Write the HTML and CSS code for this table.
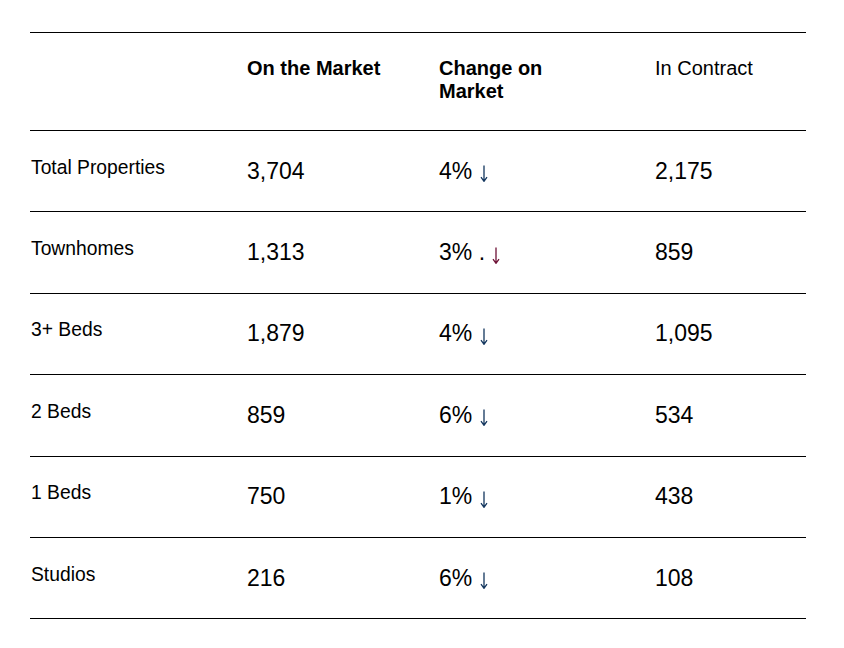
FILE: index.html
```html
<!DOCTYPE html>
<html lang="en">
<head>
<meta charset="utf-8">
<title>Market Summary</title>
<link rel="stylesheet" href="styles.css">
</head>
<body>
<div class="table">
  <div class="row head">
    <div class="cell"></div>
    <div class="cell th">On the Market</div>
    <div class="cell th narrow">Change on Market</div>
    <div class="cell thin">In Contract</div>
  </div>
  <div class="row">
    <div class="cell label">Total Properties</div>
    <div class="cell num">3,704</div>
    <div class="cell num">4% <svg class="down" viewBox="0 0 8 17" aria-label="down"><path d="M4 0.5V16M1 12.2L4 16.3L7 12.2"/></svg></div>
    <div class="cell num">2,175</div>
  </div>
  <div class="row">
    <div class="cell label">Townhomes</div>
    <div class="cell num">1,313</div>
    <div class="cell num">3% . <svg class="down red" viewBox="0 0 8 17" aria-label="down"><path d="M4 0.5V16M1 12.2L4 16.3L7 12.2"/></svg></div>
    <div class="cell num">859</div>
  </div>
  <div class="row">
    <div class="cell label">3+ Beds</div>
    <div class="cell num">1,879</div>
    <div class="cell num">4% <svg class="down" viewBox="0 0 8 17" aria-label="down"><path d="M4 0.5V16M1 12.2L4 16.3L7 12.2"/></svg></div>
    <div class="cell num">1,095</div>
  </div>
  <div class="row">
    <div class="cell label">2 Beds</div>
    <div class="cell num">859</div>
    <div class="cell num">6% <svg class="down" viewBox="0 0 8 17" aria-label="down"><path d="M4 0.5V16M1 12.2L4 16.3L7 12.2"/></svg></div>
    <div class="cell num">534</div>
  </div>
  <div class="row">
    <div class="cell label">1 Beds</div>
    <div class="cell num">750</div>
    <div class="cell num">1% <svg class="down" viewBox="0 0 8 17" aria-label="down"><path d="M4 0.5V16M1 12.2L4 16.3L7 12.2"/></svg></div>
    <div class="cell num">438</div>
  </div>
  <div class="row last">
    <div class="cell label">Studios</div>
    <div class="cell num">216</div>
    <div class="cell num">6% <svg class="down" viewBox="0 0 8 17" aria-label="down"><path d="M4 0.5V16M1 12.2L4 16.3L7 12.2"/></svg></div>
    <div class="cell num">108</div>
  </div>
</div>
</body>
</html>
```

FILE: styles.css
```css
html, body {
  margin: 0;
  padding: 0;
  background: #ffffff;
}

body {
  font-family: "Liberation Sans", Arial, sans-serif;
  color: #000000;
}

.table {
  width: 776px;
  margin: 32px 0 0 30px;
}

.row {
  display: grid;
  grid-template-columns: 216px 192px 216px 152px;
  align-items: center;
  height: 80.4px;
  border-top: 1px solid #000000;
}

.row.last {
  border-bottom: 1px solid #000000;
}

.row.head {
  height: auto;
  align-items: start;
  padding: 24px 0 27px;
}

.cell {
  padding-left: 1px;
}

.th,
.thin {
  font-size: 20px;
  line-height: 23px;
}

.th {
  font-weight: bold;
}

.narrow {
  max-width: 150px;
}

.label {
  font-size: 19.3px;
  margin-bottom: 7px;
}

.num {
  font-size: 23px;
}

.down {
  width: 8px;
  height: 17px;
  margin-left: 1px;
  vertical-align: -3.5px;
  fill: none;
  stroke: #13365e;
  stroke-width: 1.3;
}

.down.red {
  stroke: #6e1236;
}
```
